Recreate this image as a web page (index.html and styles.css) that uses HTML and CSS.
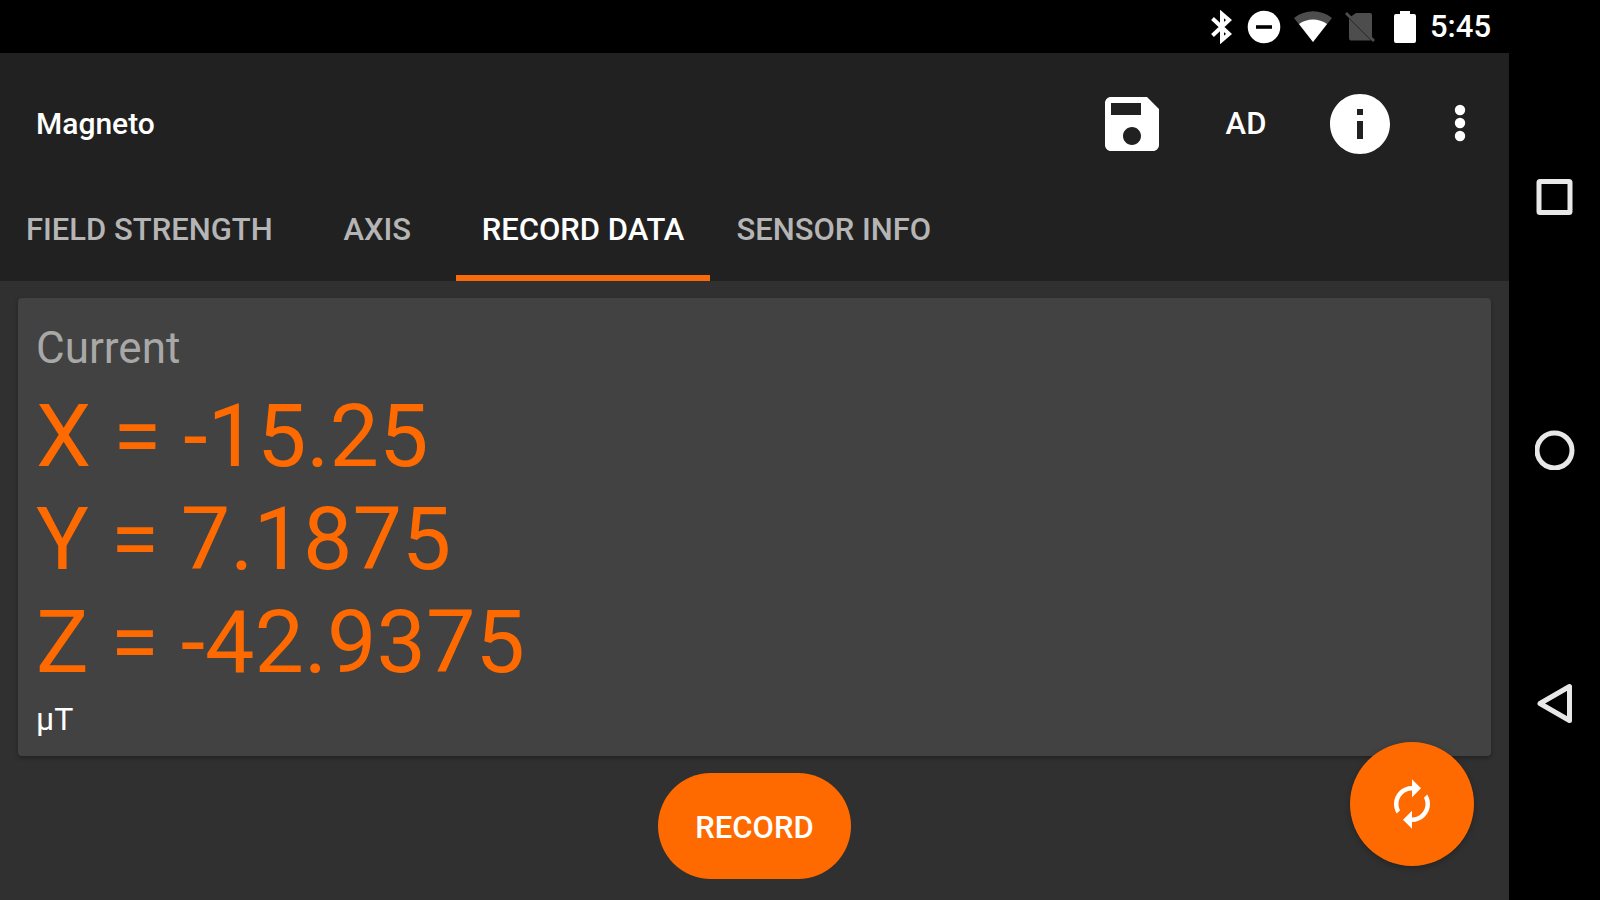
FILE: index.html
```html
<!DOCTYPE html>
<html lang="en">
<head>
<meta charset="utf-8">
<title>Magneto</title>
<link rel="stylesheet" href="styles.css">
</head>
<body>
<div class="device">
  <div class="screen">
    <div class="status-bar">
      <svg class="bluetooth" viewBox="0 0 22 34" fill="none" stroke="#fff" stroke-width="4"><path d="M1.500 8.500 18 24 11 30V4L18 10 1.500 25.500"/></svg>
      <svg class="dnd" viewBox="0 0 34 34"><circle cx="17" cy="17" r="16.300" fill="#fff"/><path d="M9 15.200h16v3.600H9z"/></svg>
      <svg class="wifi" viewBox="0 0 38 34"><path fill="#4d4d4d" d="M0 8C11-1 27-1 38 8L19 32z"/><path fill="#fff" d="M5 14C13 8 25 8 33 14L19 32z"/></svg>
      <svg class="sim" viewBox="0 0 30 34"><path fill="#4d4d4d" d="M11 3H25Q27 3 27 5V27L6 6.500zM4 8.500 26 30.500H6Q4 30.500 4 28zM0 4 2 2 30 30 28 32z"/></svg>
      <svg class="battery" viewBox="0 0 22 34"><path fill="#fff" d="M6 1H16V4H20Q22 4 22 6V31Q22 33 20 33H2Q0 33 0 31V6Q0 4 2 4H6z"/></svg>
      <span class="clock">5:45</span>
    </div>
    <header class="app-header">
      <div class="toolbar">
        <h1 class="title">Magneto</h1>
        <div class="actions">
          <button class="action" aria-label="Save"><svg class="action-icon" viewBox="0 0 24 24"><path fill="#fff" d="M17 3H5c-1.110 0-2 .9-2 2v14c0 1.100.89 2 2 2h14c1.100 0 2-.9 2-2V7l-4-4zm-5 16c-1.660 0-3-1.340-3-3s1.340-3 3-3 3 1.340 3 3-1.340 3-3 3zm3-10H5V5h10v4z"/></svg></button>
          <button class="action ad">AD</button>
          <button class="action" aria-label="Info"><svg class="action-icon" viewBox="0 0 24 24"><path fill="#fff" d="M12 2C6.480 2 2 6.480 2 12s4.480 10 10 10 10-4.480 10-10S17.520 2 12 2zm1 15h-2v-6h2v6zm0-8h-2V7h2v2z"/></svg></button>
          <button class="action more" aria-label="More options"><svg class="more-icon" viewBox="0 0 12 40" fill="#fff"><circle cx="6" cy="6" r="5.200"/><circle cx="6" cy="19" r="5.200"/><circle cx="6" cy="32" r="5.200"/></svg></button>
        </div>
      </div>
      <nav class="tabs" role="tablist">
        <button class="tab" role="tab">FIELD STRENGTH</button>
        <button class="tab" role="tab">AXIS</button>
        <button class="tab selected" role="tab" aria-selected="true">RECORD DATA</button>
        <button class="tab" role="tab">SENSOR INFO</button>
      </nav>
    </header>
    <main class="content">
      <section class="card">
        <h2 class="card-title">Current</h2>
        <div class="reading">X = -15.25</div>
        <div class="reading">Y = 7.1875</div>
        <div class="reading">Z = -42.9375</div>
        <div class="unit">µT</div>
      </section>
      <button class="record">RECORD</button>
      <button class="fab" aria-label="Reset"><svg class="fab-icon" viewBox="0 0 24 24"><path fill="#fff" d="M12 6v3l4-4-4-4v3c-4.420 0-8 3.580-8 8 0 1.570.46 3.030 1.240 4.260L6.700 14.800c-.45-.83-.7-1.790-.7-2.800 0-3.310 2.690-6 6-6zm6.760 1.740L17.300 9.200c.44.840.7 1.790.7 2.800 0 3.310-2.690 6-6 6v-3l-4 4 4 4v-3c4.420 0 8-3.580 8-8 0-1.570-.46-3.030-1.240-4.260z"/></svg></button>
    </main>
  </div>
  <nav class="system-nav">
    <button class="nav-button" aria-label="Recent apps"><svg class="nav-icon" viewBox="0 0 40 40"><rect x="4" y="4.500" width="31" height="31" rx="1"/></svg></button>
    <button class="nav-button" aria-label="Home"><svg class="nav-icon" viewBox="0 0 40 40"><circle cx="19.500" cy="20.500" r="17.500"/></svg></button>
    <button class="nav-button" aria-label="Back"><svg class="nav-icon" viewBox="0 0 40 40"><path d="M5 20.500 34.500 3.500V37.500z" stroke-linejoin="round"/></svg></button>
  </nav>
</div>
</body>
</html>
```
FILE: styles.css
```css
* {
  box-sizing: border-box;
}

body {
  margin: 0;
  background: #000;
  color: #fff;
  font-family: Roboto, "Liberation Sans", sans-serif;
}

button {
  margin: 0;
  padding: 0;
  border: 0;
  background: none;
  color: inherit;
  font: inherit;
}

svg {
  display: block;
}

.device {
  display: flex;
  min-height: 100vh;
}

.screen {
  flex: 1;
  display: flex;
  flex-direction: column;
  background: #303030;
}

.status-bar {
  display: flex;
  align-items: center;
  justify-content: flex-end;
  height: 53px;
  padding-right: 18px;
  background: #000;
}

.status-bar svg {
  height: 34px;
}

.bluetooth {
  width: 22px;
  margin-right: 14px;
}

.dnd {
  width: 34px;
  margin-right: 13px;
}

.wifi {
  width: 38px;
  margin-right: 13px;
}

.sim {
  width: 30px;
  margin-right: 19px;
}

.battery {
  width: 22px;
  margin-right: 14px;
}

.clock {
  font-size: 31px;
  font-weight: 500;
}

.app-header {
  background: #212121;
}

.toolbar {
  display: flex;
  align-items: center;
  justify-content: space-between;
  height: 141px;
  padding: 0 29px 0 36px;
}

.title {
  margin: 0;
  font-size: 30px;
  font-weight: 500;
}

.actions {
  display: flex;
  align-items: center;
}

.action {
  display: flex;
  align-items: center;
  justify-content: center;
  width: 114px;
  height: 96px;
}

.ad {
  font-size: 31px;
  font-weight: 500;
}

.action-icon {
  width: 72px;
  height: 72px;
}

.more {
  width: 40px;
  margin-left: 23px;
}

.more-icon {
  width: 12px;
  height: 40px;
}

.tabs {
  display: flex;
  height: 87px;
}

.tab {
  min-width: 157px;
  padding: 0 26px 10px;
  border-bottom: 6px solid transparent;
  color: #b5b5b5;
  font-size: 31px;
  font-weight: 500;
  white-space: nowrap;
}

.tab.selected {
  border-color: #f96a0b;
  color: #fff;
}

.content {
  position: relative;
  flex: 1;
  display: flex;
  flex-direction: column;
  align-items: center;
  padding: 17px 18px 19px;
}

.card {
  align-self: stretch;
  padding: 24px 18px 18px;
  border-radius: 4px;
  background: #424242;
  box-shadow: 0 2px 4px rgba(0, 0, 0, 0.3);
}

.card-title {
  margin: 0 0 10px;
  color: #a8a8a8;
  font-size: 44px;
  font-weight: 400;
  line-height: 52px;
}

.reading {
  color: #ff6a00;
  font-size: 88px;
  line-height: 103px;
}

.unit {
  margin-top: 7px;
  font-size: 32px;
  line-height: 38px;
}

.record {
  width: 193px;
  height: 106px;
  margin-top: 17px;
  padding-top: 2px;
  border-radius: 53px;
  background: #ff6a00;
  font-size: 31px;
  font-weight: 500;
}

.fab {
  position: absolute;
  right: 35px;
  bottom: 34px;
  display: flex;
  align-items: center;
  justify-content: center;
  width: 124px;
  height: 124px;
  border-radius: 50%;
  background: #ff6a00;
  box-shadow: 0 2px 6px rgba(0, 0, 0, 0.25);
}

.fab-icon {
  width: 54px;
  height: 54px;
}

.system-nav {
  display: flex;
  flex-direction: column;
  align-items: center;
  justify-content: center;
  gap: 213px;
  width: 91px;
}

.nav-icon {
  width: 40px;
  height: 40px;
  fill: none;
  stroke: #e8e8e8;
  stroke-width: 5;
}
```
